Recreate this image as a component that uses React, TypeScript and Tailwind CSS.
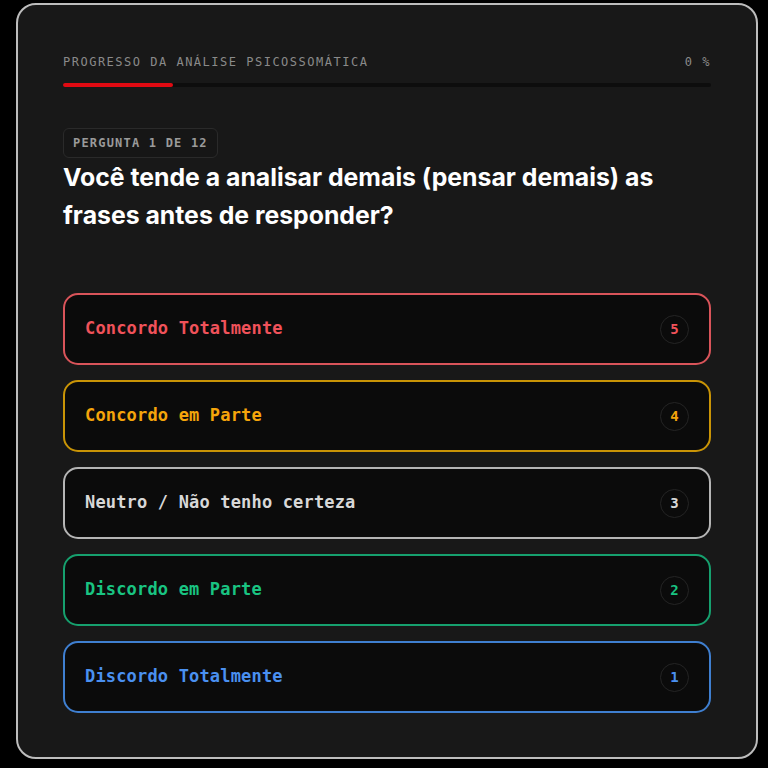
import React from "react";

const mono = "font-['DejaVu_Sans_Mono','Liberation_Mono',monospace]";

type Option = {
  label: string;
  value: number;
  border: string;
  text: string;
};

const options: Option[] = [
  { label: "Concordo Totalmente", value: 5, border: "border-[#d9545a]", text: "text-[#f0525a]" },
  { label: "Concordo em Parte", value: 4, border: "border-[#c99406]", text: "text-[#f5a50b]" },
  { label: "Neutro / Não tenho certeza", value: 3, border: "border-[#b5b5b5]", text: "text-[#d8d8d8]" },
  { label: "Discordo em Parte", value: 2, border: "border-[#16a06e]", text: "text-[#19c482]" },
  { label: "Discordo Totalmente", value: 1, border: "border-[#3f7fd0]", text: "text-[#4a90f0]" },
];

export default function App() {
  return (
    <div className="min-h-[768px] w-full bg-black pt-[3px] pb-2 pl-4">
      <div className="w-[742px] rounded-[20px] border-2 border-[#bdbdbd] bg-[#181818] px-[45px] pt-[48px] pb-[44px]">
        <div className={`flex items-center justify-between text-[12px] font-medium tracking-[0.125em] text-[#8a8a8a] ${mono}`}>
          <span>PROGRESSO DA ANÁLISE PSICOSSOMÁTICA</span>
          <span>0 %</span>
        </div>
        <div className="mt-[12px] h-[4px] w-full rounded-full bg-[#0d0d0d]">
          <div className="h-full w-[17%] rounded-full bg-[#e00a12]" />
        </div>

        <div className="mt-[41px]">
          <span
            className={`inline-flex h-[30px] items-center rounded-[6px] border border-[#2a2a2a] bg-[#161616] px-[9px] text-[12px] font-bold tracking-[0.1em] text-[#9a9a9a] ${mono}`}
          >
            PERGUNTA 1 DE 12
          </span>
          <h1 className="font-['Inter','Noto_Sans',sans-serif] text-[24.8px] leading-[38px] font-bold text-white">
            Você tende a analisar demais (pensar demais) as frases antes de responder?
          </h1>
        </div>

        <div className="mt-[59px] flex flex-col gap-[15px]">
          {options.map((o) => (
            <button
              key={o.value}
              className={`flex h-[72px] w-full items-center justify-between rounded-[15px] border-2 ${o.border} bg-[#0b0b0b] pr-[20px] pl-[20px] text-left`}
            >
              <span className={`text-[17px] font-bold tracking-[0.01em] ${o.text} ${mono}`}>{o.label}</span>
              <span
                className={`flex h-[29px] w-[29px] items-center justify-center rounded-full border border-[#242424] text-[14px] font-bold ${o.text} ${mono}`}
              >
                {o.value}
              </span>
            </button>
          ))}
        </div>
      </div>
    </div>
  );
}
